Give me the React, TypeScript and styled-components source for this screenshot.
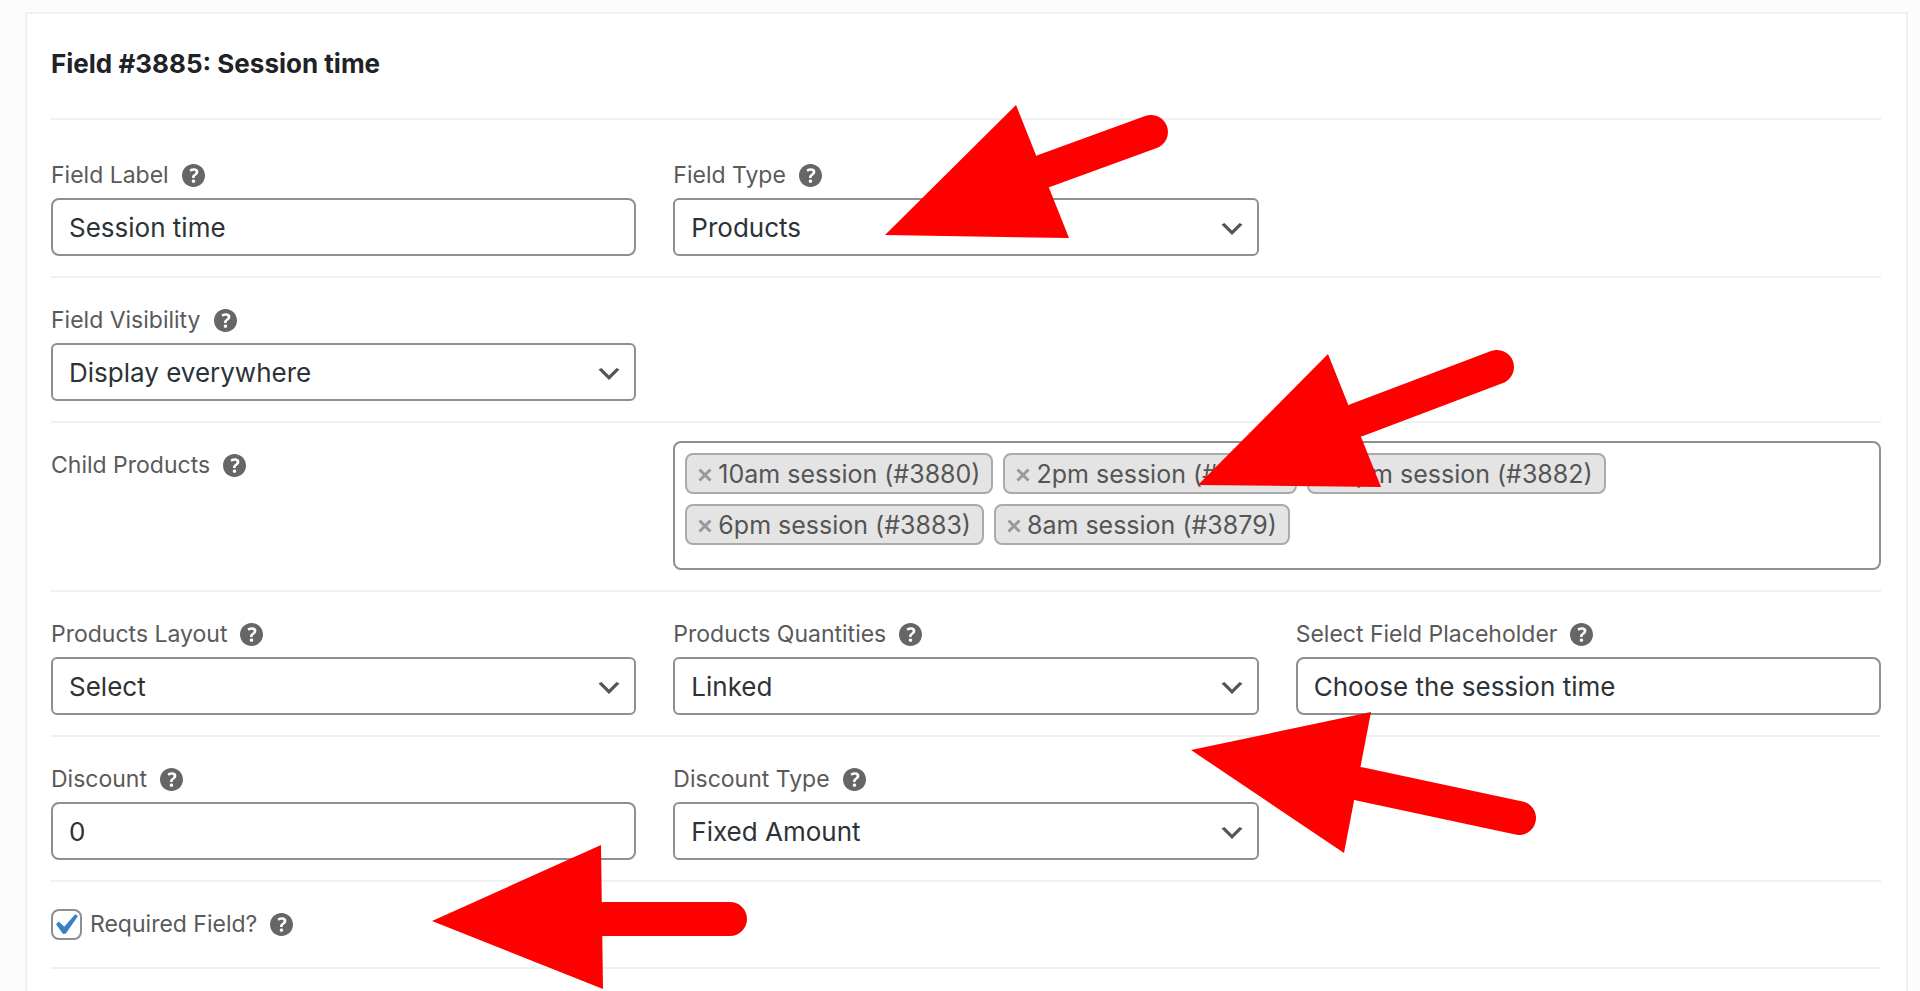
import React from "react";
import styled, { createGlobalStyle } from "styled-components";

const GlobalStyle = createGlobalStyle`
  * { box-sizing: border-box; }
  body {
    margin: 0;
    background: #fcfcfc;
    font-family: Inter, "Liberation Sans", sans-serif;
    color: #2c3338;
  }
`;

const Page = styled.div`
  position: relative;
  min-height: 100vh;
  padding: 12px 12px 0 25px;
  overflow: hidden;
`;

const Card = styled.form`
  min-height: calc(100vh - 12px);
  padding: 0 25px 22px 24px;
  background: #fff;
  border: 2px solid #f0f0f0;
  border-bottom: 0;
`;

const CardHeader = styled.header`
  padding: 34px 0 38px;
`;

const Title = styled.h2`
  margin: 0;
  font-size: 26px;
  line-height: 32px;
  font-weight: 700;
  color: #1d2327;
`;

const Row = styled.section<{ $first?: boolean }>`
  display: grid;
  grid-template-columns: repeat(3, minmax(0, 1fr));
  column-gap: 37px;
  padding: ${(p) => (p.$first ? 31 : 18)}px 0 20px;
  border-top: 2px solid #f0f0f1;
`;

const Divider = styled.hr`
  margin: 0;
  border: 0;
  border-top: 2px solid #f0f0f1;
`;

const Field = styled.div`
  display: flex;
  flex-direction: column;
`;

const LabelLine = styled.div`
  display: flex;
  align-items: center;
  gap: 13px;
  height: 30px;
  margin: 9px 0 8px;
`;

const Label = styled.label`
  font-size: 23px;
  line-height: 30px;
  color: #5a5a5a;
`;

const HelpButton = styled.button`
  display: flex;
  padding: 0;
  border: 0;
  background: none;
  color: #666;
  cursor: help;
`;

const TextInput = styled.input`
  width: 100%;
  height: 58px;
  padding: 0 16px;
  border: 2px solid #8c8f94;
  border-radius: 8px;
  background: #fff;
  font: inherit;
  font-size: 26px;
  color: #2c3338;
`;

const SelectWrap = styled.div`
  display: grid;
  align-items: center;
  & > * { grid-area: 1 / 1; }
`;

const SelectBox = styled.select`
  appearance: none;
  width: 100%;
  height: 58px;
  padding: 0 48px 0 16px;
  border: 2px solid #8c8f94;
  border-radius: 6px;
  background: #fff;
  font: inherit;
  font-size: 26px;
  color: #2c3338;
`;

const Chevron = styled.svg`
  justify-self: end;
  margin: 4px 12px 0 0;
  pointer-events: none;
  fill: #555;
`;

const TokenBox = styled.ul`
  grid-column: span 2;
  display: flex;
  flex-wrap: wrap;
  align-content: flex-start;
  gap: 10px;
  min-height: 129px;
  margin: 0;
  padding: 10px;
  list-style: none;
  border: 2px solid #8c8f94;
  border-radius: 8px;
`;

const Token = styled.li`
  display: flex;
  align-items: center;
  gap: 6px;
  height: 41px;
  padding: 0 11px;
  border: 2px solid #aaa;
  border-radius: 8px;
  background: #e4e4e4;
  font-size: 25px;
  line-height: 36px;
  color: #555;
`;

const RemoveButton = styled.button`
  display: flex;
  padding: 2px 0 0;
  border: 0;
  background: none;
  color: #999;
  cursor: pointer;
`;

const CheckWrap = styled.span`
  display: grid;
  place-items: center;
  & > * { grid-area: 1 / 1; }
  svg { pointer-events: none; }
`;

const CheckInput = styled.input`
  appearance: none;
  width: 31px;
  height: 31px;
  margin: 0;
  border: 2px solid #8c8f94;
  border-radius: 8px;
  background: #fff;
`;

const CheckLabel = styled.div`
  display: flex;
  align-items: center;
  gap: 8px;
`;

const Annotations = styled.svg`
  position: absolute;
  top: 0;
  left: 0;
  width: 100%;
  height: 100%;
  pointer-events: none;
`;

const HelpTip = ({ about }: { about: string }) => (
  <HelpButton type="button" aria-label={`Help: ${about}`}>
    <svg width="23" height="23" viewBox="3 3 14 14" fill="currentColor" aria-hidden="true">
      <path d="M17 10c0-3.87-3.14-7-7-7-3.87 0-7 3.13-7 7s3.13 7 7 7c3.86 0 7-3.13 7-7zm-6.3 1.48H9.14v-.43c0-.38.08-.7.24-.98s.46-.57.88-.89c.41-.29.68-.53.81-.71.14-.18.2-.39.2-.62 0-.25-.09-.44-.28-.58-.19-.13-.45-.19-.79-.19-.58 0-1.25.19-2 .57l-.64-1.28c.87-.49 1.8-.74 2.77-.74.81 0 1.45.2 1.92.58.48.39.71.91.71 1.55 0 .43-.09.8-.29 1.11-.19.32-.57.67-1.11 1.06-.38.28-.61.49-.71.63-.1.15-.15.34-.15.57v.35zm-1.47 2.74c-.18-.17-.27-.42-.27-.73 0-.33.08-.58.26-.75s.43-.25.77-.25c.32 0 .57.09.75.26s.27.42.27.74c0 .3-.09.55-.27.72-.18.18-.43.27-.75.27-.33 0-.58-.09-.76-.26z" />
    </svg>
  </HelpButton>
);

const FieldLabel = ({ id, text }: { id: string; text: string }) => (
  <LabelLine>
    <Label htmlFor={id}>{text}</Label>
    <HelpTip about={text} />
  </LabelLine>
);

const TextField = ({ id, label, value }: { id: string; label: string; value: string }) => (
  <Field>
    <FieldLabel id={id} text={label} />
    <TextInput id={id} type="text" defaultValue={value} />
  </Field>
);

const SelectField = ({ id, label, value }: { id: string; label: string; value: string }) => (
  <Field>
    <FieldLabel id={id} text={label} />
    <SelectWrap>
      <SelectBox id={id} defaultValue={value}>
        <option>{value}</option>
      </SelectBox>
      <Chevron width="30" height="30" viewBox="0 0 20 20" aria-hidden="true">
        <path d="M5 6l5 5 5-5 2 1-7 7-7-7 2-1z" />
      </Chevron>
    </SelectWrap>
  </Field>
);

const products = [
  "10am session (#3880)",
  "2pm session (#3881)",
  "4pm session (#3882)",
  "6pm session (#3883)",
  "8am session (#3879)",
];

const arrows = [
  { head: "885,235 1016,105 1069,238", shaft: "M1044 171 1151 132" },
  { head: "1198,485 1328,354 1381,487", shaft: "M1357 420 1497 367" },
  { head: "1191,750 1371,712 1344,853", shaft: "M1360 784 1519 818" },
  { head: "432,921 601,845 603,989", shaft: "M604 919 730 919" },
];

export default function App() {
  return (
    <Page>
      <GlobalStyle />
      <Card>
        <CardHeader>
          <Title>Field #3885: Session time</Title>
        </CardHeader>
        <Row $first>
          <TextField id="field-label" label="Field Label" value="Session time" />
          <SelectField id="field-type" label="Field Type" value="Products" />
        </Row>
        <Row>
          <SelectField id="field-visibility" label="Field Visibility" value="Display everywhere" />
        </Row>
        <Row>
          <LabelLine>
            <Label as="span" id="child-products">Child Products</Label>
            <HelpTip about="Child Products" />
          </LabelLine>
          <TokenBox aria-labelledby="child-products">
            {products.map((name) => (
              <Token key={name}>
                <RemoveButton type="button" aria-label={`Remove ${name}`}>
                  <svg width="14" height="14" viewBox="0 0 14 14" stroke="currentColor" strokeWidth="3" aria-hidden="true">
                    <path d="M1.5 1.5l11 11M12.5 1.5l-11 11" />
                  </svg>
                </RemoveButton>
                {name}
              </Token>
            ))}
          </TokenBox>
        </Row>
        <Row>
          <SelectField id="layout" label="Products Layout" value="Select" />
          <SelectField id="quantities" label="Products Quantities" value="Linked" />
          <TextField id="placeholder" label="Select Field Placeholder" value="Choose the session time" />
        </Row>
        <Row>
          <TextField id="discount" label="Discount" value="0" />
          <SelectField id="discount-type" label="Discount Type" value="Fixed Amount" />
        </Row>
        <Row>
          <LabelLine>
            <CheckLabel>
              <CheckWrap>
                <CheckInput id="required" type="checkbox" defaultChecked />
                <svg width="22" height="20" viewBox="5.78 4.89 10.39 9.32" fill="#3582c4" aria-hidden="true">
                  <path d="M14.83 4.89l1.34.94-5.81 8.38H9.02L5.78 9.67l1.34-1.25 2.57 2.4z" />
                </svg>
              </CheckWrap>
              <Label htmlFor="required">Required Field?</Label>
            </CheckLabel>
            <HelpTip about="Required Field" />
          </LabelLine>
        </Row>
        <Divider />
      </Card>
      <Annotations aria-hidden="true">
        {arrows.map(({ head, shaft }) => (
          <g key={head}>
            <path d={shaft} stroke="#f00" strokeWidth="34" strokeLinecap="round" />
            <polygon points={head} fill="#f00" />
          </g>
        ))}
      </Annotations>
    </Page>
  );
}
